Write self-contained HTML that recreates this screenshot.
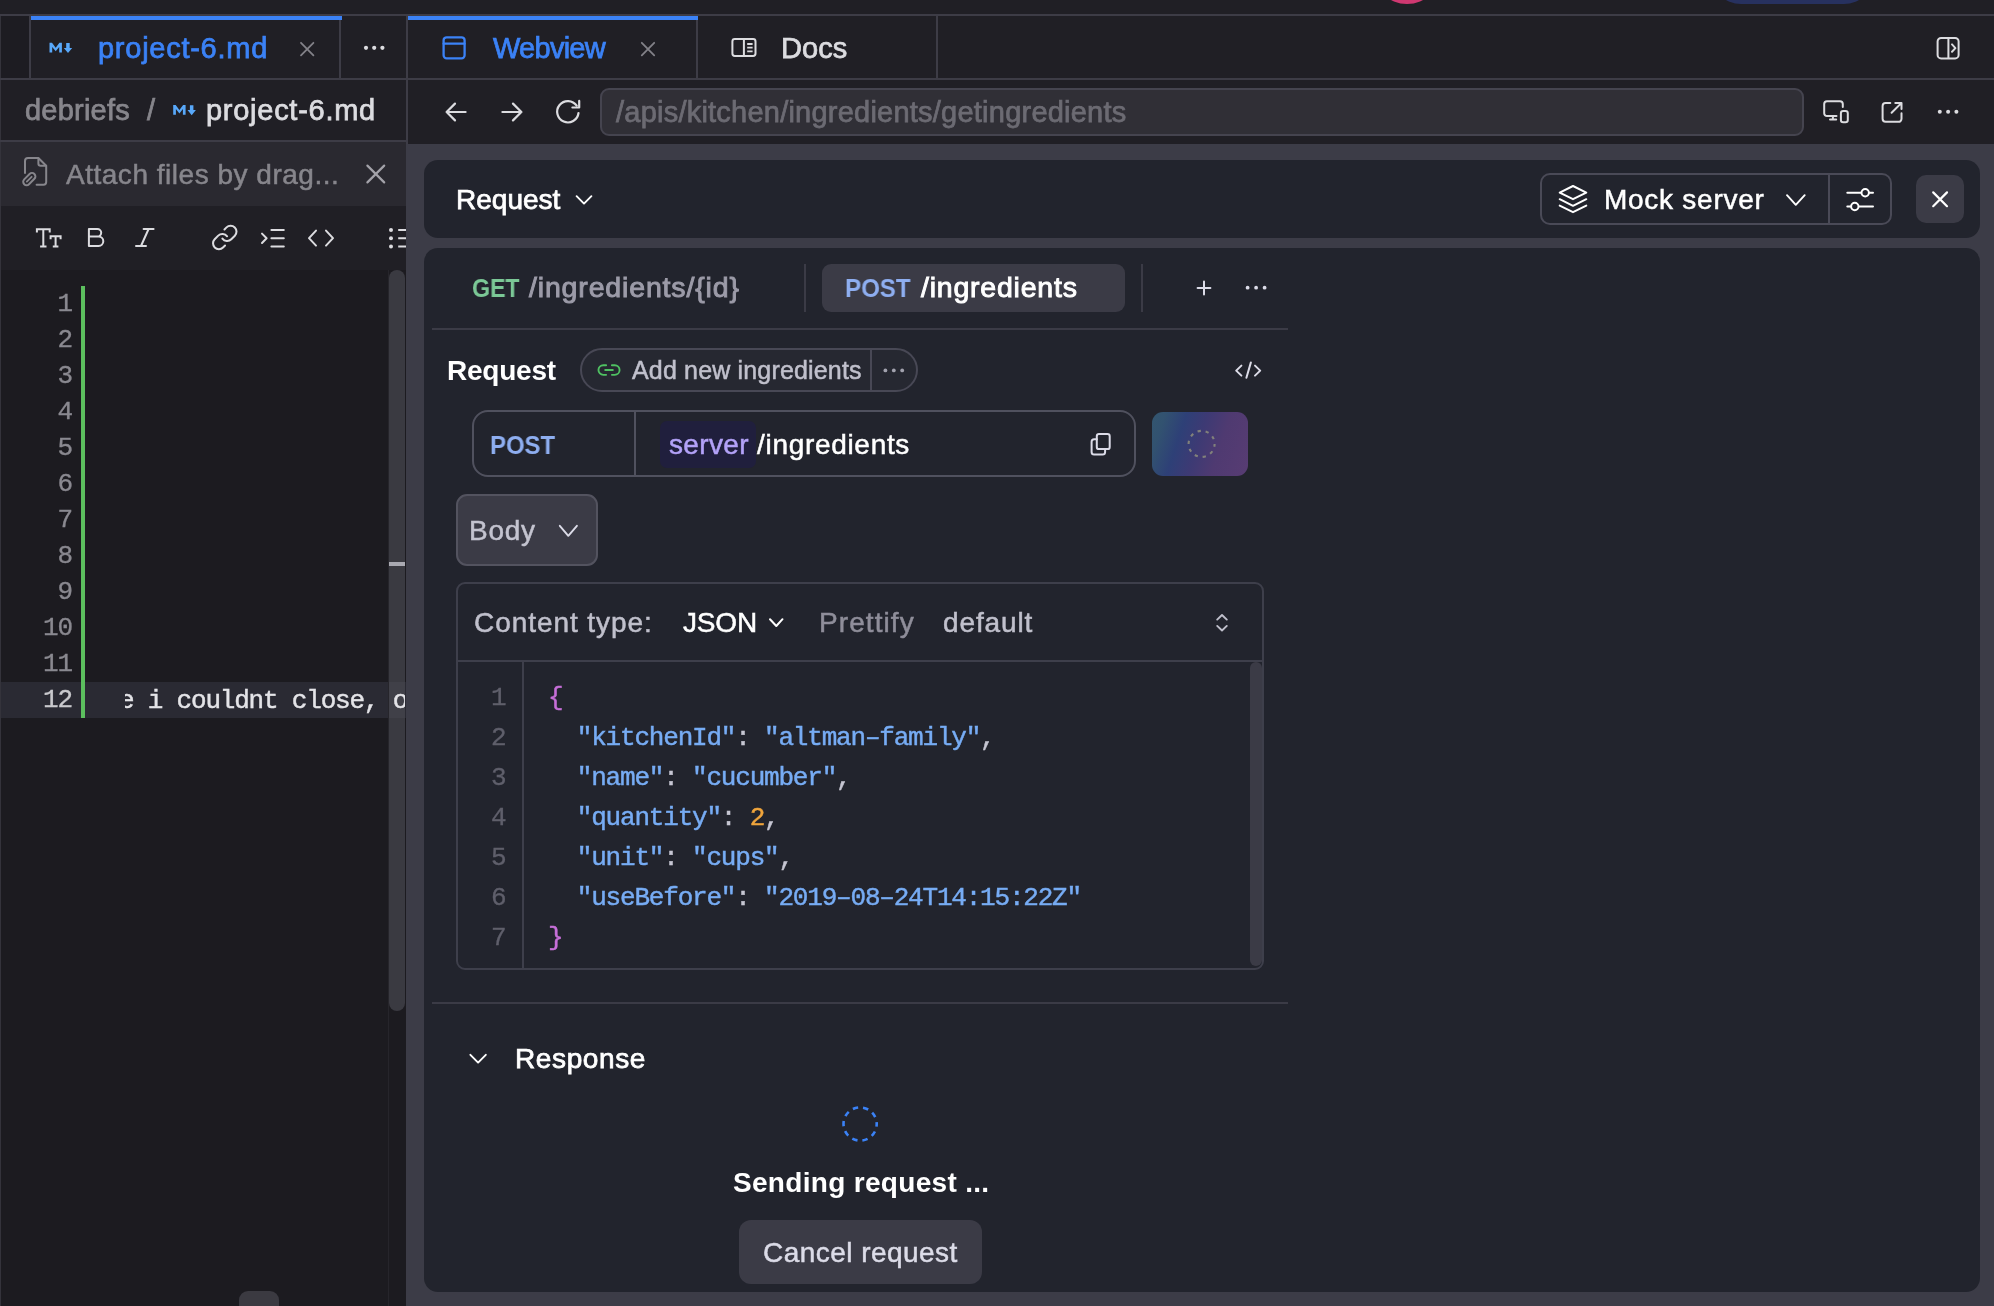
<!DOCTYPE html>
<html lang="en">
<head>
<meta charset="utf-8">
<title>Webview - Mock server request</title>
<style>
html,body{margin:0;padding:0;}
body{width:1994px;height:1306px;overflow:hidden;background:#201f25;position:relative;font-family:"Liberation Sans",sans-serif;}
.b{position:absolute;box-sizing:border-box;}
.t,.ln,.code{will-change:transform;}
.t{position:absolute;white-space:pre;font-family:"Liberation Sans",sans-serif;font-weight:400;}
.t.m{font-family:"Liberation Mono",monospace;}
.ln{-webkit-text-stroke:0.35px currentColor;position:absolute;font:400 26px/26px "Liberation Mono",monospace;letter-spacing:-1.2px;white-space:pre;}
.code{-webkit-text-stroke:0.45px currentColor;position:absolute;font:400 26px/26px "Liberation Mono",monospace;letter-spacing:-1.2px;white-space:pre;color:#c6c6d2;}
.k{color:#77acf4;} .n{color:#f0a53c;} .br{color:#c66fd8;}
svg{position:absolute;left:0;top:0;overflow:visible;}
.s{fill:none;stroke-linecap:round;stroke-linejoin:round;}
</style>
</head>
<body>
<!-- ================= window chrome ================= -->
<div class="b" style="left:1372.7px;top:-64.6px;width:68.6px;height:68.6px;border-radius:50%;background:#cf3871"></div>
<div class="b" style="left:1711.2px;top:-56.2px;width:162.5px;height:60px;border-radius:30px;background:#27315f"></div>
<div class="b" style="left:0;top:14px;width:1994px;height:2px;background:#3d3c46"></div>
<div class="b" style="left:0;top:16px;width:1px;height:1290px;background:#34333b"></div>

<!-- ================= left panel ================= -->
<div class="b" id="left" style="left:0;top:16px;width:406px;height:1290px;">
  <div class="b" style="left:1px;top:0;width:28px;height:62px;background:#1d1c22"></div>
  <div class="b" style="left:29px;top:0;width:2px;height:62px;background:#3d3c46"></div>
  <div class="b" style="left:339px;top:0;width:2px;height:62px;background:#3d3c46"></div>
  <div class="b" style="left:31px;top:0;width:311px;height:4px;background:#3b82f6"></div>
  <div class="b" style="left:0;top:62px;width:406px;height:2px;background:#3d3c46"></div>
  <div class="b" style="left:0;top:124px;width:406px;height:2px;background:#3d3c46"></div>
  <div class="b" style="left:1px;top:126px;width:405px;height:64px;background:#2a2930"></div>
  <div class="b" style="left:1px;top:254px;width:405px;height:1036px;background:#1c1b20"></div>
  <!-- current line -->
  <div class="b" style="left:1px;top:666px;width:405px;height:36px;background:#2a2a33"></div>
  <!-- git gutter bar -->
  <div class="b" style="left:81px;top:270px;width:4px;height:432px;background:#5cbf5e"></div>
  <div class="b" style="left:388px;top:254px;width:1px;height:1036px;background:#26252b"></div>
  <!-- scrollbars -->
  <div class="b" style="left:389px;top:254px;width:16px;height:741px;border-radius:8px;background:rgba(78,77,86,0.62)"></div>
  <div class="b" style="left:389px;top:546px;width:16px;height:4px;background:#a9a9b1"></div>
  <div class="b" style="left:239px;top:1275px;width:40px;height:24px;border-radius:9px;background:#3b3a41"></div>
</div>
<!-- editor line numbers -->
<div id="gutter">
<span class="ln" style="left:43.0px;top:291.1px;color:#8a8990"> 1</span>
<span class="ln" style="left:43.0px;top:327.1px;color:#8a8990"> 2</span>
<span class="ln" style="left:43.0px;top:363.1px;color:#8a8990"> 3</span>
<span class="ln" style="left:43.0px;top:399.1px;color:#8a8990"> 4</span>
<span class="ln" style="left:43.0px;top:435.1px;color:#8a8990"> 5</span>
<span class="ln" style="left:43.0px;top:471.1px;color:#8a8990"> 6</span>
<span class="ln" style="left:43.0px;top:507.1px;color:#8a8990"> 7</span>
<span class="ln" style="left:43.0px;top:543.1px;color:#8a8990"> 8</span>
<span class="ln" style="left:43.0px;top:579.1px;color:#8a8990"> 9</span>
<span class="ln" style="left:43.0px;top:615.1px;color:#8a8990">10</span>
<span class="ln" style="left:43.0px;top:651.1px;color:#8a8990">11</span>
<span class="ln" style="left:43.0px;top:687.1px;color:#c9c9cd">12</span>
</div>
<!-- line 12 text (clipped) -->
<div class="b" style="left:124.6px;top:682px;width:280.6px;height:36px;overflow:hidden">
  <span class="code" style="left:-5.2px;top:5.8px;color:#e4e4e8">e i couldnt close, or</span>
</div>

<!-- ================= right panel ================= -->
<div class="b" style="left:406px;top:16px;width:2px;height:128px;background:#3d3c46"></div>
<div class="b" style="left:408px;top:16px;width:290px;height:4px;background:#3b82f6;z-index:2"></div>
<div class="b" style="left:696px;top:16px;width:2px;height:62px;background:#3d3c46"></div>
<div class="b" style="left:936px;top:16px;width:2px;height:62px;background:#3d3c46"></div>
<div class="b" style="left:406px;top:78px;width:1588px;height:2px;background:#3d3c46"></div>
<!-- url box -->
<div class="b" style="left:600px;top:88px;width:1204px;height:48px;border:2px solid #45444f;border-radius:9px;background:#302f36"></div>

<!-- webview -->
<div class="b" id="web" style="left:406px;top:144px;width:1588px;height:1162px;background:#3c3c47"></div>
<div class="b" style="left:424px;top:160px;width:1556px;height:78px;border-radius:14px;background:#22242d"></div>
<div class="b" style="left:424px;top:248px;width:1556px;height:1044px;border-radius:14px;background:#22242d"></div>
<!-- mock server selector -->
<div class="b" style="left:1540px;top:173px;width:352px;height:52px;border:2px solid #4a4a57;border-radius:10px"></div>
<div class="b" style="left:1828px;top:175px;width:2px;height:48px;background:#4a4a57"></div>
<div class="b" style="left:1916px;top:175px;width:48px;height:48px;border-radius:10px;background:#3b3b46"></div>
<!-- request tabs -->
<div class="b" style="left:804px;top:264px;width:2px;height:48px;background:#3b3b46"></div>
<div class="b" style="left:822px;top:264px;width:303px;height:48px;border-radius:9px;background:#3b3b46"></div>
<div class="b" style="left:1141px;top:264px;width:2px;height:48px;background:#3b3b46"></div>
<div class="b" style="left:432px;top:328px;width:856px;height:2px;background:#3b3b46"></div>
<!-- operation pill -->
<div class="b" style="left:580px;top:348px;width:338px;height:44px;border:2px solid #484855;border-radius:22px;background:#262831"></div>
<div class="b" style="left:870px;top:350px;width:2px;height:40px;background:#484855"></div>
<!-- url input -->
<div class="b" style="left:472px;top:410px;width:664px;height:67px;border:2px solid #50515e;border-radius:16px"></div>
<div class="b" style="left:634px;top:412px;width:2px;height:63px;background:#50515e"></div>
<div class="b" style="left:660px;top:420.5px;width:96px;height:47px;border-radius:7px;background:#201f3d"></div>
<!-- send button (loading) -->
<div class="b" style="left:1152px;top:412px;width:96px;height:64px;border-radius:11px;background:linear-gradient(108deg,#33566f 0%,#325270 12%,#2e4077 30%,#3d3a74 48%,#4f3a71 68%,#583c73 100%)"></div>
<!-- body select -->
<div class="b" style="left:456px;top:494px;width:142px;height:72px;border:2px solid #53535f;border-radius:11px;background:#3b3b46"></div>
<!-- code box -->
<div class="b" style="left:456px;top:582px;width:808px;height:388px;border:2px solid #3e3f4b;border-radius:9px"></div>
<div class="b" style="left:458px;top:660px;width:804px;height:2px;background:#3e3f4b"></div>
<div class="b" style="left:522px;top:662px;width:2px;height:306px;background:#3e3f4b"></div>
<div class="b" style="left:1250px;top:662px;width:12px;height:304px;border-radius:6px;background:#3b3b46"></div>
<div class="b" style="left:432px;top:1002px;width:856px;height:2px;background:#3b3b46"></div>
<!-- cancel -->
<div class="b" style="left:739px;top:1220px;width:243px;height:64px;border-radius:12px;background:#3b3b46"></div>

<!-- code -->
<div id="code">
<span class="ln" style="left:491.2px;top:685.0px;color:#5f5f6b">1</span>
<span class="code" style="left:547.6px;top:685.0px"><span class="br">{</span></span>
<span class="ln" style="left:491.2px;top:725.0px;color:#5f5f6b">2</span>
<span class="code" style="left:547.6px;top:725.0px">  <span class="k">"kitchenId"</span>: <span class="k">"altman–family"</span>,</span>
<span class="ln" style="left:491.2px;top:765.0px;color:#5f5f6b">3</span>
<span class="code" style="left:547.6px;top:765.0px">  <span class="k">"name"</span>: <span class="k">"cucumber"</span>,</span>
<span class="ln" style="left:491.2px;top:805.0px;color:#5f5f6b">4</span>
<span class="code" style="left:547.6px;top:805.0px">  <span class="k">"quantity"</span>: <span class="n">2</span>,</span>
<span class="ln" style="left:491.2px;top:845.0px;color:#5f5f6b">5</span>
<span class="code" style="left:547.6px;top:845.0px">  <span class="k">"unit"</span>: <span class="k">"cups"</span>,</span>
<span class="ln" style="left:491.2px;top:885.0px;color:#5f5f6b">6</span>
<span class="code" style="left:547.6px;top:885.0px">  <span class="k">"useBefore"</span>: <span class="k">"2019–08–24T14:15:22Z"</span></span>
<span class="ln" style="left:491.2px;top:925.0px;color:#5f5f6b">7</span>
<span class="code" style="left:547.6px;top:925.0px"><span class="br">}</span></span>
</div>

<span class="t" style="left:98.36px;top:34.00px;font-size:29px;line-height:29px;-webkit-text-stroke:0.75px #3b82f6;color:#3b82f6;letter-spacing:0.738px;">project-6.md</span>
<span class="t" style="left:25.17px;top:96.00px;font-size:29px;line-height:29px;-webkit-text-stroke:0.75px #87868c;color:#87868c;letter-spacing:0.213px;">debriefs</span>
<span class="t" style="left:146.68px;top:96.00px;font-size:29px;line-height:29px;-webkit-text-stroke:0.75px #87868c;color:#87868c;letter-spacing:0.494px;">/</span>
<span class="t" style="left:206.36px;top:96.00px;font-size:29px;line-height:29px;-webkit-text-stroke:0.75px #dcdce0;color:#dcdce0;letter-spacing:0.729px;">project-6.md</span>
<span class="t" style="left:65.95px;top:161.00px;font-size:28px;line-height:28px;-webkit-text-stroke:0.5px #87868c;color:#87868c;letter-spacing:0.517px;">Attach files by drag...</span>
<span class="t" style="left:493.27px;top:34.00px;font-size:29px;line-height:29px;-webkit-text-stroke:0.75px #3b82f6;color:#3b82f6;letter-spacing:-0.737px;">Webview</span>
<span class="t" style="left:780.91px;top:34.00px;font-size:29px;line-height:29px;-webkit-text-stroke:0.75px #dcdce0;color:#dcdce0;letter-spacing:0.084px;">Docs</span>
<span class="t" style="left:616.08px;top:98.00px;font-size:29px;line-height:29px;-webkit-text-stroke:0.75px #6c6b73;color:#6c6b73;letter-spacing:0.228px;">/apis/kitchen/ingredients/getingredients</span>
<span class="t" style="left:456.19px;top:186.00px;font-size:28px;line-height:28px;-webkit-text-stroke:0.75px #ffffff;color:#ffffff;letter-spacing:0.009px;">Request</span>
<span class="t" style="left:1604.06px;top:186.00px;font-size:28px;line-height:28px;-webkit-text-stroke:0.5px #ffffff;color:#ffffff;letter-spacing:0.736px;">Mock server</span>
<span class="t" style="left:471.92px;top:276.00px;font-size:25px;line-height:25px;font-weight:700;transform:scaleX(0.9254);transform-origin:0.78px 50%;color:#7bc896;letter-spacing:0.000px;">GET</span>
<span class="t" style="left:529.48px;top:273.00px;font-size:28.5px;line-height:28.5px;-webkit-text-stroke:0.95px #9c9ba8;color:#9c9ba8;letter-spacing:0.840px;">/ingredients/{id}</span>
<span class="t" style="left:844.74px;top:276.00px;font-size:25px;line-height:25px;font-weight:700;transform:scaleX(0.9629);transform-origin:1.56px 50%;color:#8eaef0;letter-spacing:0.000px;">POST</span>
<span class="t" style="left:920.77px;top:273.00px;font-size:28.5px;line-height:28.5px;-webkit-text-stroke:0.95px #ffffff;color:#ffffff;letter-spacing:0.782px;">/ingredients</span>
<span class="t" style="left:447.05px;top:357.00px;font-size:28px;line-height:28px;font-weight:700;color:#ffffff;letter-spacing:-0.230px;">Request</span>
<span class="t" style="left:631.65px;top:358.00px;font-size:25px;line-height:25px;-webkit-text-stroke:0.5px #c0c0cc;color:#c0c0cc;letter-spacing:0.164px;">Add new ingredients</span>
<span class="t" style="left:489.94px;top:433.00px;font-size:25px;line-height:25px;font-weight:700;transform:scaleX(0.9554);transform-origin:1.56px 50%;color:#8eaef0;letter-spacing:0.000px;">POST</span>
<span class="t" style="left:668.81px;top:431.00px;font-size:28px;line-height:28px;-webkit-text-stroke:0.5px #b3a2f8;color:#b3a2f8;letter-spacing:0.356px;">server</span>
<span class="t" style="left:757.25px;top:431.00px;font-size:28px;line-height:28px;-webkit-text-stroke:0.5px #ffffff;color:#ffffff;letter-spacing:0.692px;">/ingredients</span>
<span class="t" style="left:469.06px;top:517.00px;font-size:28px;line-height:28px;-webkit-text-stroke:0.5px #c4c4d0;color:#c4c4d0;letter-spacing:0.722px;">Body</span>
<span class="t" style="left:473.94px;top:609.00px;font-size:28px;line-height:28px;-webkit-text-stroke:0.5px #c0c0cc;color:#c0c0cc;letter-spacing:0.933px;">Content type:</span>
<span class="t" style="left:682.51px;top:609.00px;font-size:28px;line-height:28px;-webkit-text-stroke:0.5px #ffffff;color:#ffffff;letter-spacing:-0.152px;">JSON</span>
<span class="t" style="left:819.06px;top:609.00px;font-size:28px;line-height:28px;-webkit-text-stroke:0.5px #8f8e9a;color:#8f8e9a;letter-spacing:1.080px;">Prettify</span>
<span class="t" style="left:942.58px;top:609.00px;font-size:28px;line-height:28px;-webkit-text-stroke:0.5px #c0c0cc;color:#c0c0cc;letter-spacing:0.868px;">default</span>
<span class="t" style="left:515.39px;top:1045.00px;font-size:28px;line-height:28px;-webkit-text-stroke:0.75px #ffffff;color:#ffffff;letter-spacing:0.613px;">Response</span>
<span class="t" style="left:732.86px;top:1169.00px;font-size:28px;line-height:28px;font-weight:700;color:#ffffff;letter-spacing:0.312px;">Sending request ...</span>
<span class="t" style="left:762.54px;top:1239.00px;font-size:28px;line-height:28px;-webkit-text-stroke:0.5px #dcdce8;color:#dcdce8;letter-spacing:0.461px;">Cancel request</span>

<!-- ================= icons (page coordinates) ================= -->
<svg width="1994" height="1306" viewBox="0 0 1994 1306">
<!-- markdown file icons -->
<g id="md1" fill="#58a8fa"><path d="M49.5,52.5 V42.8 H52 L55.7,47.7 L59.4,42.8 H61.9 V52.5 H59.2 V46.9 L55.7,51.3 L52.2,46.9 V52.5 Z"/><path d="M66.2,43 H69.7 V47.9 H72.2 L68,53.1 L63.8,47.9 H66.2 Z"/></g>
<g fill="#58a8fa" transform="translate(123.7,62.2)"><path d="M49.5,52.5 V42.8 H52 L55.7,47.7 L59.4,42.8 H61.9 V52.5 H59.2 V46.9 L55.7,51.3 L52.2,46.9 V52.5 Z"/><path d="M66.2,43 H69.7 V47.9 H72.2 L68,53.1 L63.8,47.9 H66.2 Z"/></g>
<!-- tab close buttons -->
<path class="s" stroke="#828188" stroke-width="1.8" d="M301,42.8 L313.4,55.4 M313.4,42.8 L301,55.4"/>
<path class="s" stroke="#828188" stroke-width="1.8" d="M641.8,42.8 L654.2,55.4 M654.2,42.8 L641.8,55.4"/>
<!-- left tab more -->
<g fill="#dcdce0"><circle cx="366" cy="47.8" r="2.1"/><circle cx="374.2" cy="47.8" r="2.1"/><circle cx="382.4" cy="47.8" r="2.1"/></g>
<!-- webview icon -->
<g class="s" stroke="#3b82f6" stroke-width="2.3"><rect x="443.6" y="37.3" width="21" height="21" rx="3"/><path d="M443.6,43.7 H464.6"/></g>
<!-- docs icon -->
<g class="s" stroke="#dcdce0" stroke-width="2"><rect x="732.4" y="39" width="23.1" height="17" rx="2.4"/><path d="M743.9,39 V56" style="stroke-linecap:butt"/><path d="M747.2,44 H752.6 M747.2,47.7 H752.6 M747.2,51.4 H752.6" stroke-width="1.8" style="stroke-linecap:butt"/></g>
<!-- right panel toggle -->
<g class="s" stroke="#dcdce0" stroke-width="2"><rect x="1937.6" y="37.9" width="21" height="20.5" rx="3.5"/><path d="M1948.4,37.9 V58.4" style="stroke-linecap:butt"/><path d="M1952,44.4 L1955.4,48.1 L1952,51.8"/></g>
<!-- nav arrows -->
<g class="s" stroke="#dcdce0" stroke-width="2.2">
  <path d="M446.6,112 H465.6 M455,103.6 L446.6,112 L455,120.4"/>
  <path d="M502.4,112 H521.4 M513,103.6 L521.4,112 L513,120.4"/>
  <path d="M576.7,105.7 A10.7,10.7 0 1 0 578.5,113"/>
  <path d="M579.2,100.9 V107.5 H572.4"/>
</g>
<!-- device / external / more -->
<g class="s" stroke="#dcdce0" stroke-width="2">
  <path d="M1836.5,116 H1827 a2.8,2.8 0 0 1 -2.8,-2.8 V104.1 a2.8,2.8 0 0 1 2.8,-2.8 H1840 a2.8,2.8 0 0 1 2.8,2.8 V107"/>
  <path d="M1832.9,116 V119.3 M1830,119.4 H1836.2"/>
  <rect x="1840.9" y="110.9" width="6.9" height="11.4" rx="2.3"/>
  <path d="M1890.3,102.9 H1885.6 a3,3 0 0 0 -3,3 V118.8 a3,3 0 0 0 3,3 H1898.5 a3,3 0 0 0 3,-3 V113.2"/>
  <path d="M1891.6,112.8 L1901.3,103.1 M1895.3,102.9 H1901.5 V109.1"/>
</g>
<g fill="#dcdce0"><circle cx="1939.8" cy="111.7" r="2"/><circle cx="1948.1" cy="111.7" r="2"/><circle cx="1956.4" cy="111.7" r="2"/></g>
<!-- attach icon -->
<g class="s" stroke="#87868c" stroke-width="2">
  <path d="M25,173 V161 a3,3 0 0 1 3,-3 H38.4 L46.2,165.8 V182 a2.7,2.7 0 0 1 -2.7,2.7 H36.6"/>
  <path d="M38.4,158.4 V163.6 a2.2,2.2 0 0 0 2.2,2.2 H46"/>
  <g transform="rotate(45 29.3 179.1)"><rect x="25.9" y="171.9" width="6.8" height="14.4" rx="3.4"/><path d="M29.3,175.8 V182.6" stroke-width="1.8"/></g>
</g>
<path class="s" stroke="#a3a2a9" stroke-width="2.2" d="M367.4,165.6 L384.2,182.4 M384.2,165.6 L367.4,182.4"/>
<!-- toolbar -->
<g class="s" stroke="#dcdce0" stroke-width="2" style="stroke-linecap:butt;stroke-linejoin:miter">
  <path d="M36.9,232.6 V229.2 H49.7 V232.6 M43.3,229.2 V246.5 M40.1,246.5 H46.5"/>
  <path d="M50.6,239.2 V236.2 H60.6 V239.2 M55.6,236.2 V246.5 M52.8,246.5 H58.4"/>
</g>
<path class="s" stroke="#dcdce0" stroke-width="2" d="M88.9,229 V246 H98.6 a4.7,4.7 0 0 0 0,-9.4 H88.9 M88.9,229 H97.4 a3.8,3.8 0 0 1 0,7.6"/>
<g class="s" stroke="#dcdce0" stroke-width="2"><path d="M143.6,229 H153.6 M136,246 H146 M148.6,229 L141,246"/></g>
<g class="s" stroke="#dcdce0" stroke-width="1.72" transform="translate(210.6,223.3) scale(1.18)">
  <path d="M10 13a5 5 0 0 0 7.54.54l3-3a5 5 0 0 0-7.07-7.07l-1.72 1.71"/>
  <path d="M14 11a5 5 0 0 0-7.54-.54l-3 3a5 5 0 0 0 7.07 7.07l1.71-1.71"/>
</g>
<g class="s" stroke="#dcdce0" stroke-width="2">
  <path d="M262,233.6 L266.6,238.3 L262,243"/>
  <path d="M271.4,229.9 H283.8 M271.4,238.3 H283.8 M271.4,246.6 H283.8"/>
  <path d="M316,230.6 L309,238.1 L316,245.6 M326,230.6 L333,238.1 L326,245.6"/>
  <path d="M398.2,229.9 H406 M398.2,238.3 H406 M398.2,246.6 H406" style="stroke-linecap:butt"/>
</g>
<g fill="#dcdce0"><circle cx="391" cy="229.9" r="2"/><circle cx="391" cy="238.3" r="2"/><circle cx="391" cy="246.6" r="2"/></g>
<!-- request header -->
<path class="s" stroke="#fff" stroke-width="1.9" d="M576.6,196.2 L584,203.6 L591.4,196.2"/>
<g class="s" stroke="#fff" stroke-width="2">
  <path d="M1573,186 L1586.3,192.6 L1573,199.2 L1559.7,192.6 Z"/>
  <path d="M1559.7,199.2 L1573,205.8 L1586.3,199.2 M1559.7,205.6 L1573,212.2 L1586.3,205.6"/>
  <path d="M1787,195.2 L1795.8,204.8 L1804.7,195.2" stroke-width="1.9"/>
  <path d="M1847.3,192.7 H1861 M1869.4,192.7 H1873 M1847.3,206.5 H1850.6 M1859,206.5 H1873"/>
  <circle cx="1865.2" cy="192.7" r="3.7"/><circle cx="1854.8" cy="206.5" r="3.7"/>
  <path d="M1933.2,192.4 L1947,206.2 M1947,192.4 L1933.2,206.2" stroke-width="2.2"/>
</g>
<!-- tab actions -->
<path class="s" stroke="#dcdce8" stroke-width="2" d="M1197.6,288 H1210.4 M1204,281.6 V294.4"/>
<g fill="#dcdce8"><circle cx="1247.6" cy="287.7" r="1.9"/><circle cx="1256.1" cy="287.7" r="1.9"/><circle cx="1264.6" cy="287.7" r="1.9"/></g>
<!-- green link -->
<g class="s" stroke="#4fc162" stroke-width="1.95" transform="translate(597.5,358.5) scale(0.96)">
  <path d="M15 7h3a5 5 0 0 1 5 5 5 5 0 0 1-5 5h-3m-6 0H6a5 5 0 0 1-5-5 5 5 0 0 1 5-5h3"/><path d="M8 12h8"/>
</g>
<g fill="#a2a2ae"><circle cx="885.4" cy="370.4" r="1.9"/><circle cx="893.8" cy="370.4" r="1.9"/><circle cx="902.2" cy="370.4" r="1.9"/></g>
<!-- code icon -->
<path class="s" stroke="#dcdce8" stroke-width="2" d="M1241.4,365.6 L1236.2,370.6 L1241.4,375.6 M1250.9,362.4 L1246.4,377.8 M1255,365.6 L1260.2,370.6 L1255,375.6"/>
<!-- copy icon -->
<g class="s" stroke="#dcdce8" stroke-width="2">
  <rect x="1096.8" y="434" width="12.9" height="15.1" rx="2.2"/>
  <path d="M1096.8,439.2 H1094.1 a2.5,2.5 0 0 0 -2.5,2.5 V452 a2.5,2.5 0 0 0 2.5,2.5 H1102.6 a2.5,2.5 0 0 0 2.5,-2.5 V449.1"/>
</g>
<!-- send spinner -->
<circle class="s" cx="1201.6" cy="443.9" r="13" stroke="#85857b" stroke-opacity="0.95" stroke-width="2.1" stroke-dasharray="3.3 4.868" stroke-dashoffset="0.4" style="stroke-linecap:butt"/>
<!-- chevrons -->
<path class="s" stroke="#dcdce8" stroke-width="1.9" d="M559.8,525.8 L568.3,535.8 L576.9,525.8"/>
<path class="s" stroke="#fff" stroke-width="2" d="M770,619.2 L776.3,626 L782.5,619.2"/>
<path class="s" stroke="#c0c0cc" stroke-width="1.9" d="M1217.2,619.6 L1222,615 L1226.8,619.6 M1217.2,625.9 L1222,630.5 L1226.8,625.9"/>
<path class="s" stroke="#fff" stroke-width="1.9" d="M470.4,1054.8 L478.1,1062.6 L485.8,1054.8"/>
<!-- response spinner -->
<circle class="s" cx="860.1" cy="1124" r="16.6" stroke="#3b82f6" stroke-width="2.6" stroke-dasharray="5.4 5.03" stroke-dashoffset="2.7" style="stroke-linecap:butt"/>

</svg>
</body>
</html>
